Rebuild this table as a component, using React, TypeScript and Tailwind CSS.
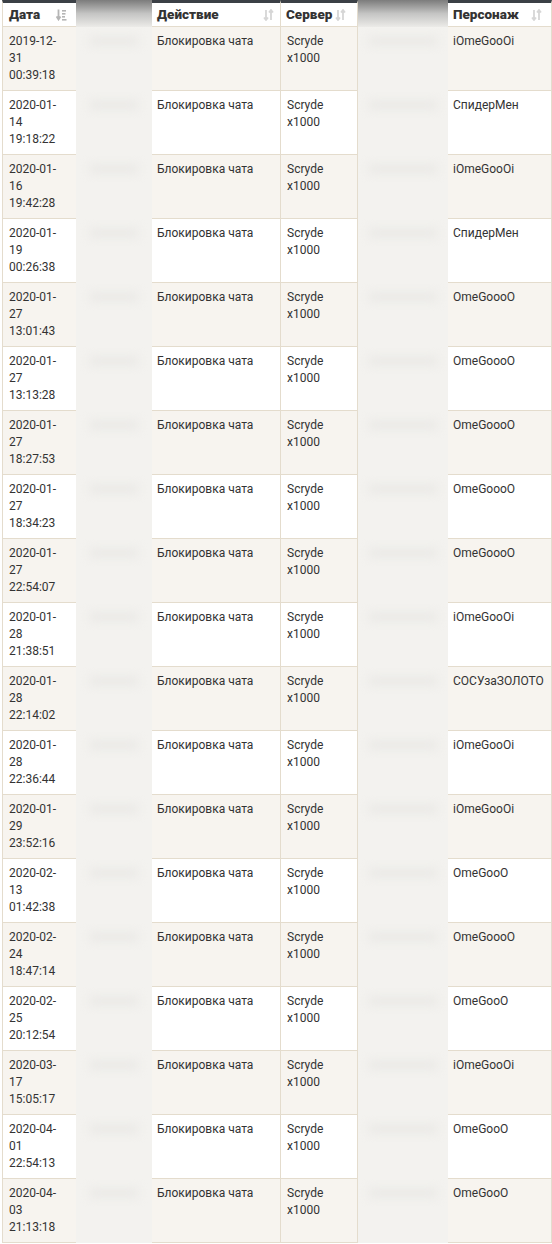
import React from "react";

type Row = { date: [string, string, string]; name: string };

const rows: Row[] = [
  { date: ["2019-12-", "31", "00:39:18"], name: "iOmeGooOi" },
  { date: ["2020-01-", "14", "19:18:22"], name: "СпидерМен" },
  { date: ["2020-01-", "16", "19:42:28"], name: "iOmeGooOi" },
  { date: ["2020-01-", "19", "00:26:38"], name: "СпидерМен" },
  { date: ["2020-01-", "27", "13:01:43"], name: "OmeGoooO" },
  { date: ["2020-01-", "27", "13:13:28"], name: "OmeGoooO" },
  { date: ["2020-01-", "27", "18:27:53"], name: "OmeGoooO" },
  { date: ["2020-01-", "27", "18:34:23"], name: "OmeGoooO" },
  { date: ["2020-01-", "27", "22:54:07"], name: "OmeGoooO" },
  { date: ["2020-01-", "28", "21:38:51"], name: "iOmeGooOi" },
  { date: ["2020-01-", "28", "22:14:02"], name: "СОСУзаЗОЛОТО" },
  { date: ["2020-01-", "28", "22:36:44"], name: "iOmeGooOi" },
  { date: ["2020-01-", "29", "23:52:16"], name: "iOmeGooOi" },
  { date: ["2020-02-", "13", "01:42:38"], name: "OmeGooO" },
  { date: ["2020-02-", "24", "18:47:14"], name: "OmeGoooO" },
  { date: ["2020-02-", "25", "20:12:54"], name: "OmeGooO" },
  { date: ["2020-03-", "17", "15:05:17"], name: "iOmeGooOi" },
  { date: ["2020-04-", "01", "22:54:13"], name: "OmeGooO" },
  { date: ["2020-04-", "03", "21:13:18"], name: "OmeGooO" },
];

const SortIcon = ({ active }: { active?: boolean }) =>
  active ? (
    <svg width="11" height="12" viewBox="0 0 11 12" className="shrink-0">
      <path d="M2.5 0.5v9M0.5 7.5l2 3 2-3" stroke="#b5b5b5" strokeWidth="1.8" fill="none" />
      <rect x="6" y="1" width="4" height="1.6" fill="#b5b5b5" />
      <rect x="6" y="4" width="3.5" height="1.6" fill="#b5b5b5" />
      <rect x="6" y="7" width="3" height="1.6" fill="#b5b5b5" />
      <rect x="6" y="10" width="4.5" height="1.6" fill="#b5b5b5" />
    </svg>
  ) : (
    <svg width="11" height="12" viewBox="0 0 11 12" className="shrink-0">
      <path d="M3 1v10M1 8.5l2 2.5 2-2.5" stroke="#d6d6d6" strokeWidth="1.8" fill="none" />
      <path d="M8 11V1M6 3.5L8 1l2 2.5" stroke="#d6d6d6" strokeWidth="1.8" fill="none" />
    </svg>
  );

const cols = "grid grid-cols-[74px_76px_129px_77px_90px_104px]";

const BlurCell = ({ w }: { w: string }) => (
  <div className="bg-[#f3f2ef] pt-[10px] flex justify-center overflow-hidden">
    <span className={`${w} h-[8px] bg-[#e9e8e5] blur-[5px] rounded-full`} />
  </div>
);

export default function App() {
  return (
    <div className="bg-white w-[552px] h-[1244px] overflow-hidden pl-[2px] text-[#333]" style={{ fontFamily: "Roboto, 'Liberation Sans', sans-serif" }}>
      {/* header */}
      <div className={`${cols} h-[27px] text-[13.5px] font-black`}>
        <div className="border-t-[3px] border-t-[#3b4046] border-b border-b-[#e4dccd] border-l border-l-[#e4dccd] flex items-center justify-between pl-[6px] pr-[9px]">
          <span>Дата</span>
          <SortIcon active />
        </div>
        <div className="bg-gradient-to-b from-[#7c7c7c] via-[#c4c4c3] to-[#ecebe8]" />
        <div className="border-t-[3px] border-t-[#3b4046] border-b border-b-[#e4dccd] border-r border-r-[#e4dccd] flex items-center justify-between pl-[5px] pr-[6px]">
          <span>Действие</span>
          <SortIcon />
        </div>
        <div className="border-t-[3px] border-t-[#3b4046] border-b border-b-[#e4dccd] border-r border-r-[#e4dccd] flex items-center pl-[5px] gap-[3px]">
          <span>Сервер</span>
          <SortIcon />
        </div>
        <div className="bg-gradient-to-b from-[#7c7c7c] via-[#c4c4c3] to-[#ecebe8]" />
        <div className="border-t-[3px] border-t-[#3b4046] border-b border-b-[#e4dccd] border-r border-r-[#e4dccd] flex items-center justify-between pl-[5px] pr-[9px]">
          <span>Персонаж</span>
          <SortIcon />
        </div>
      </div>
      {/* rows */}
      {rows.map((r, i) => {
        const bg = i % 2 === 0 ? "bg-[#f7f4ef]" : "bg-white";
        return (
          <div key={i} className={`${cols} h-[64px] text-[12px] leading-[17px]`}>
            <div className={`${bg} border-l border-b border-[#e4dccd] pl-[6px] pt-[6px]`}>
              {r.date[0]}
              <br />
              {r.date[1]}
              <br />
              {r.date[2]}
            </div>
            <BlurCell w="w-[50px]" />
            <div className={`${bg} border-b border-r border-[#e4dccd] pl-[5px] pt-[6px]`}>Блокировка чата</div>
            <div className={`${bg} border-b border-r border-[#e4dccd] pl-[6px] pt-[6px]`}>
              Scryde
              <br />
              x1000
            </div>
            <BlurCell w="w-[70px]" />
            <div className={`${bg} border-b border-r border-[#e4dccd] pl-[5px] pt-[6px]`}>{r.name}</div>
          </div>
        );
      })}
    </div>
  );
}
